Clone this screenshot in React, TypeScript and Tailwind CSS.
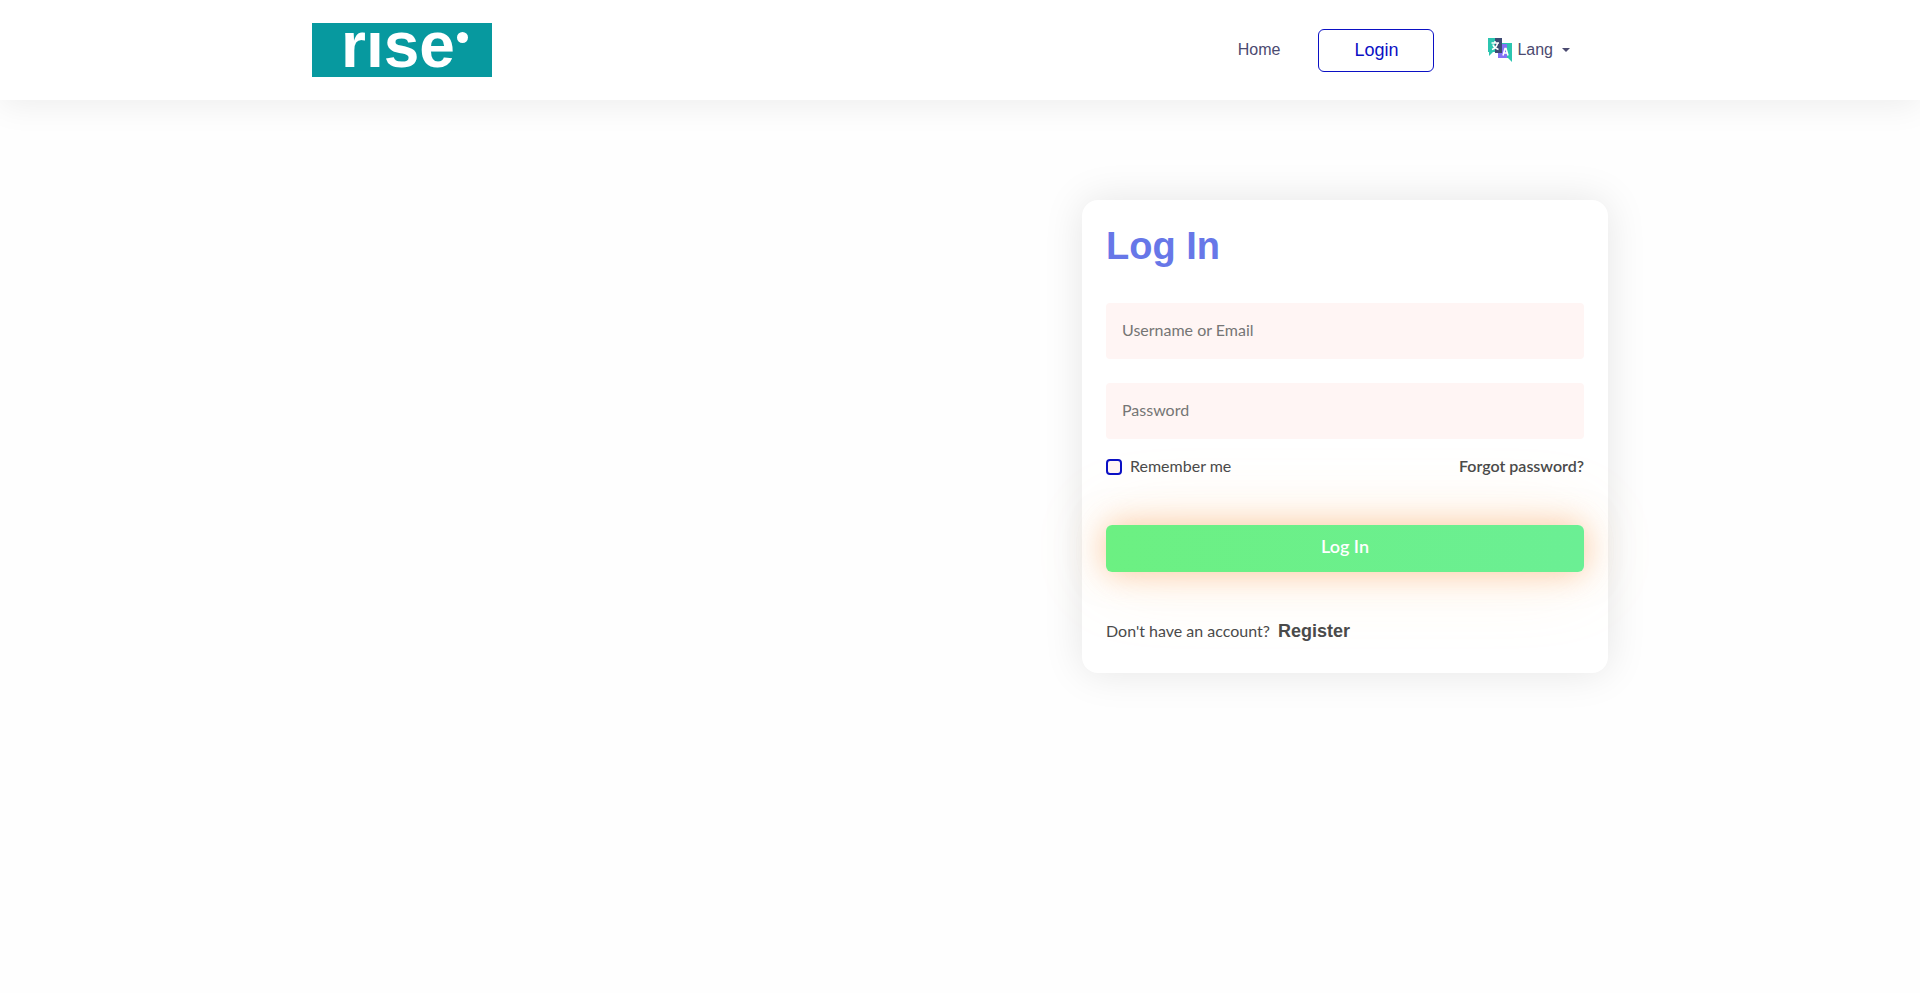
import React, { useState } from 'react';

function Logo() {
  return (
    <svg viewBox="0 0 180 54" className="w-[180px] h-[54px] overflow-visible" role="img" aria-label="rise">
      <rect width="180" height="54" fill="#07999f" />
      <text
        x="29"
        y="44"
        fill="#fff"
        fontFamily="'Liberation Sans', Arial, sans-serif"
        fontWeight="700"
        fontSize="64"
      >
        rıse
      </text>
      <circle cx="150.500" cy="14.500" r="5.500" fill="#fff" />
    </svg>
  );
}

function TranslateIcon() {
  return (
    <svg viewBox="0 0 24 24" className="w-6 h-6" aria-hidden="true">
      <path d="M14 5h10v19l-4-4h-6z" fill="#2cc5b0" />
      <path d="M10 6h9v14h-9z" fill="#8470f5" />
      <path d="M0 0h8v14H5l-4 4v-4H0z" fill="#2cc5b0" />
      <path d="M7 0h7v15H7z" fill="#3d4a73" />
      <path
        d="M3.500 5h7.500M7 3v2M9.500 5.500c-.7 3-2.700 5-5.500 6M4.800 6.500c1 2.500 3 4.200 5.700 5"
        fill="none"
        stroke="#fff"
        strokeWidth="1.500"
      />
      <path
        d="M15 17.500l2-7h1l2 7M15.800 15h3.500"
        fill="none"
        stroke="#fff"
        strokeWidth="1.600"
      />
    </svg>
  );
}

function Header() {
  return (
    <header className="relative bg-white shadow-[0_5px_32px_rgba(0,0,0,0.07)]">
      <div className="flex items-center justify-between h-[100px] max-w-[1320px] mx-auto px-3">
        <a href="#home">
          <Logo />
        </a>
        <nav className="flex items-center pr-[38px] text-[#4b4a70]">
          <a href="#home" className="mr-[38px]">
            Home
          </a>
          <a
            href="#login"
            className="flex items-center justify-center w-[116px] h-[43px] mr-[54px] border border-[#0b10c4] rounded-md text-lg text-[#0b10c4]"
          >
            Login
          </a>
          <button type="button" className="flex items-center gap-[5px]">
            <TranslateIcon />
            Lang
            <span className="ml-1 border-x-4 border-t-4 border-x-transparent border-t-[#4b4a70]" />
          </button>
        </nav>
      </div>
    </header>
  );
}

function LoginForm() {
  const [username, setUsername] = useState('');
  const [password, setPassword] = useState('');
  const [remember, setRemember] = useState(false);

  const handleSubmit = (event: React.FormEvent) => {
    event.preventDefault();
  };

  return (
    <form
      onSubmit={handleSubmit}
      className="px-6 pt-6 pb-7 bg-white rounded-2xl shadow-[0_0_40px_rgba(0,0,0,0.1)] font-[Lato,sans-serif] text-[#4a4a4a]"
    >
      <h1 className="mb-[34px] text-[38px] leading-[45px] font-bold text-[#6777e8] font-['Liberation_Sans',Arial,sans-serif]">
        Log In
      </h1>
      <input
        type="text"
        aria-label="Username or Email"
        placeholder="Username or Email"
        value={username}
        onChange={(e) => setUsername(e.target.value)}
        className="block w-full h-14 mb-6 px-4 pb-[3px] rounded-sm bg-[#fff5f4] placeholder:text-[#757575] outline-none"
      />
      <input
        type="password"
        aria-label="Password"
        placeholder="Password"
        value={password}
        onChange={(e) => setPassword(e.target.value)}
        className="block w-full h-14 mb-4 px-4 pb-[3px] rounded-sm bg-[#fff5f4] placeholder:text-[#757575] outline-none"
      />
      <div className="flex items-start justify-between h-6 mb-[46px] leading-[22px]">
        <label className="flex items-start gap-2">
          <input
            type="checkbox"
            checked={remember}
            onChange={(e) => setRemember(e.target.checked)}
            className="appearance-none w-4 h-4 mt-1 border-2 border-[#0b10c4] rounded-[4px] bg-[#fff5f4] checked:bg-[#0b10c4]"
          />
          Remember me
        </label>
        <a href="#forgot" className="font-semibold">
          Forgot password?
        </a>
      </div>
      <button
        type="submit"
        className="block w-full h-[47px] pb-1.5 mb-[45px] rounded-md bg-linear-to-r from-[#6cf082] to-[#6bef94] text-lg font-semibold text-white shadow-[0_0_32px_rgba(248,150,70,0.5),0_0_80px_rgba(255,190,110,0.2)]"
      >
        Log In
      </button>
      <p className="flex items-baseline gap-2">
        Don't have an account?
        <a href="#register" className="text-lg font-bold font-['Liberation_Sans',Arial,sans-serif]">
          Register
        </a>
      </p>
    </form>
  );
}

function App() {
  return (
    <div className="min-h-screen bg-[#fefefe] font-['Liberation_Sans',Arial,sans-serif]">
      <Header />
      <main className="flex justify-end max-w-[1320px] mx-auto py-[100px]">
        <div className="w-5/12 px-3">
          <LoginForm />
        </div>
      </main>
    </div>
  );
}

export default App;
